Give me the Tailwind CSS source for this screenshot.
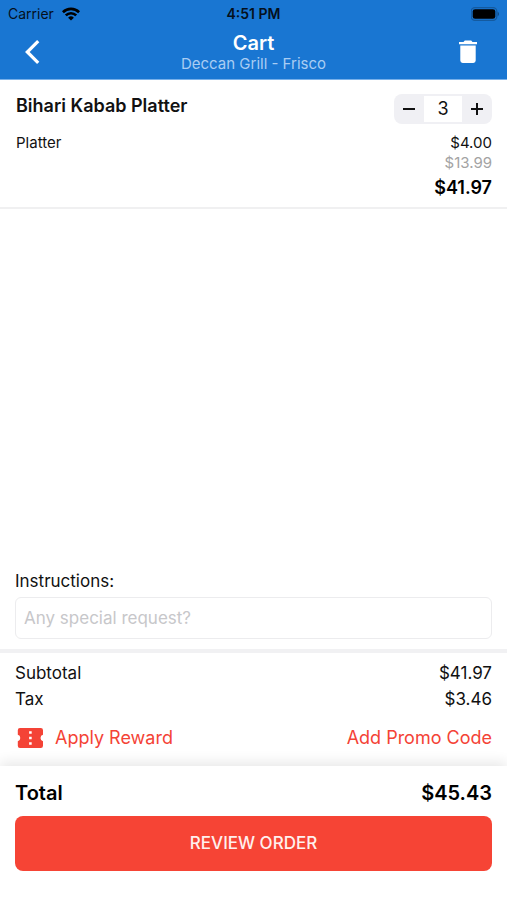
<!DOCTYPE html>
<html lang="en">
<head>
<meta charset="utf-8">
<meta name="viewport" content="width=device-width, initial-scale=1">
<title>Cart</title>
<script src="https://cdn.jsdelivr.net/npm/@tailwindcss/browser@4"></script>
</head>
<body class="flex min-h-screen flex-col bg-white font-['Inter',sans-serif] text-[#111111]">
  <header class="border-b border-[#78b0ea] bg-[#1976d2]">
    <div class="grid h-7 grid-cols-3 items-center px-2 text-sm text-[#05101c]">
      <div class="flex items-center gap-2">
        <span>Carrier</span>
        <svg class="h-[14px] w-[18px]" viewBox="0 0 18 14" fill="none" stroke="#000" stroke-width="2.7" aria-hidden="true">
          <path d="M.9 5.2a11.6 11.6 0 0 1 16.2 0"/>
          <path d="M3.8 8.4a7.4 7.4 0 0 1 10.4 0"/>
          <path d="M9 13.6 6.1 10.7a4.1 4.1 0 0 1 5.8 0z" fill="#000" stroke="none"/>
        </svg>
      </div>
      <span class="text-center font-semibold">4:51 PM</span>
      <svg class="h-[14px] w-7 justify-self-end" viewBox="0 0 28 14" aria-hidden="true">
        <rect x=".2" y=".7" width="25.6" height="12.6" rx="3.8" fill="none" stroke="#145a9f" stroke-width="1.3"/>
        <rect x="1.7" y="2.2" width="22.6" height="9.6" rx="2.4" fill="#000"/>
        <path d="M26.7 4.8c1.700.7 1.700 3.700 0 4.400z" fill="#0f4a86"/>
      </svg>
    </div>
    <div class="grid h-[51px] grid-cols-[1fr_auto_1fr] items-center pb-[3px]">
      <button type="button" aria-label="Back" class="ml-5 flex h-10 w-6 items-center justify-center">
        <svg class="h-6 w-4" viewBox="0 0 16 24" fill="none" stroke="#fff" stroke-width="3.2" aria-hidden="true"><path d="M14.2 1.2 3.3 12l10.9 10.8"/></svg>
      </button>
      <div class="text-center">
        <h1 class="text-xl leading-6 font-semibold text-white">Cart</h1>
        <p class="text-[15px] leading-[18px] text-[#a9cdf3]">Deccan Grill - Frisco</p>
      </div>
      <button type="button" aria-label="Empty cart" class="mr-[27px] flex h-10 w-6 items-center justify-center justify-self-end">
        <svg class="h-6 w-[18px]" viewBox="0 0 18 24" fill="#fff" aria-hidden="true">
          <path d="M0 1.9h4.500L5.800.6h6.400l1.300 1.300H18v2.400H0z"/>
          <path d="M1.300 5.600h15.400v15a2.400 2.400 0 0 1-2.400 2.400H3.700a2.400 2.400 0 0 1-2.400-2.400z"/>
        </svg>
      </button>
    </div>
  </header>

  <main class="flex flex-1 flex-col">
    <section class="flex justify-between border-b-2 border-[#f0f0f1] pt-[14px] pr-[15px] pb-2 pl-4">
      <div>
        <h2 class="text-lg leading-6 font-semibold">Bihari Kabab Platter</h2>
        <p class="mt-[15px] text-[15px] leading-5">Platter</p>
      </div>
      <div class="flex flex-col items-end">
        <div class="flex h-[30px] w-[98px] items-center rounded-lg bg-[#f0f0f4]">
          <button type="button" aria-label="Decrease quantity" class="flex h-full w-[30px] items-center justify-center">
            <svg class="size-3" viewBox="0 0 12 12" stroke="#111" stroke-width="2" aria-hidden="true"><path d="M0 6h12"/></svg>
          </button>
          <output class="flex h-[26px] flex-1 items-center justify-center bg-white text-lg">3</output>
          <button type="button" aria-label="Increase quantity" class="flex h-full w-[30px] items-center justify-center">
            <svg class="size-3" viewBox="0 0 12 12" stroke="#111" stroke-width="2" aria-hidden="true"><path d="M0 6h12M6 0v12"/></svg>
          </button>
        </div>
        <p class="mt-[9px] text-[15px] leading-5">$4.00</p>
        <p class="text-[15px] leading-5 text-[#a3a3a3]">$13.99</p>
        <p class="mt-1 text-lg leading-[22px] font-semibold text-black">$41.97</p>
      </div>
    </section>

    <div class="flex-1"></div>

    <section class="flex flex-col gap-1 px-[15px] pb-[10px]">
      <label for="instructions" class="text-[17px] leading-6">Instructions:</label>
      <input id="instructions" type="text" placeholder="Any special request?" class="h-[42px] w-full rounded-md border border-[#ececee] px-2 text-[17px] placeholder:text-[#c7c7ca] outline-none">
    </section>

    <section class="border-t-4 border-[#f1f1f3] px-[15px] pt-[7px] pb-[10px]">
      <dl class="text-[17px] leading-[26px]">
        <div class="flex justify-between"><dt>Subtotal</dt><dd>$41.97</dd></div>
        <div class="flex justify-between"><dt>Tax</dt><dd>$3.46</dd></div>
      </dl>
      <div class="mt-2 flex h-9 items-center justify-between text-lg text-[#f44336]">
        <button type="button" class="flex items-center gap-3">
          <svg class="h-5 w-7" viewBox="0 0 28 20" aria-hidden="true">
            <path d="M5 0h20.8A2.2 2.2 0 0 1 28 2.2v4.6a3.3 3.3 0 0 0 0 6.4v4.6A2.2 2.2 0 0 1 25.8 20H5A2.2 2.2 0 0 1 2.8 17.8v-4.6a3.3 3.3 0 0 0 0-6.4V2.2A2.2 2.2 0 0 1 5 0z" fill="#f44336"/>
            <path d="M14.1 3.2h2.6v2.6h-2.6zM14.1 8.7h2.6v2.6h-2.6zM14.1 14.2h2.6v2.6h-2.6z" fill="#fff"/>
          </svg>
          <span>Apply Reward</span>
        </button>
        <button type="button">Add Promo Code</button>
      </div>
    </section>
  </main>

  <footer class="bg-white px-[15px] pt-[13px] pb-[29px] shadow-[0_-4px_12px_rgba(0,0,0,0.09)]">
    <div class="flex justify-between text-xl leading-7 font-semibold text-black">
      <span>Total</span><span>$45.43</span>
    </div>
    <button type="button" class="mt-[9px] h-[55px] w-full rounded-lg bg-[#f64435] text-[17px] font-medium text-[#fff0ee]">REVIEW ORDER</button>
  </footer>
</body>
</html>
